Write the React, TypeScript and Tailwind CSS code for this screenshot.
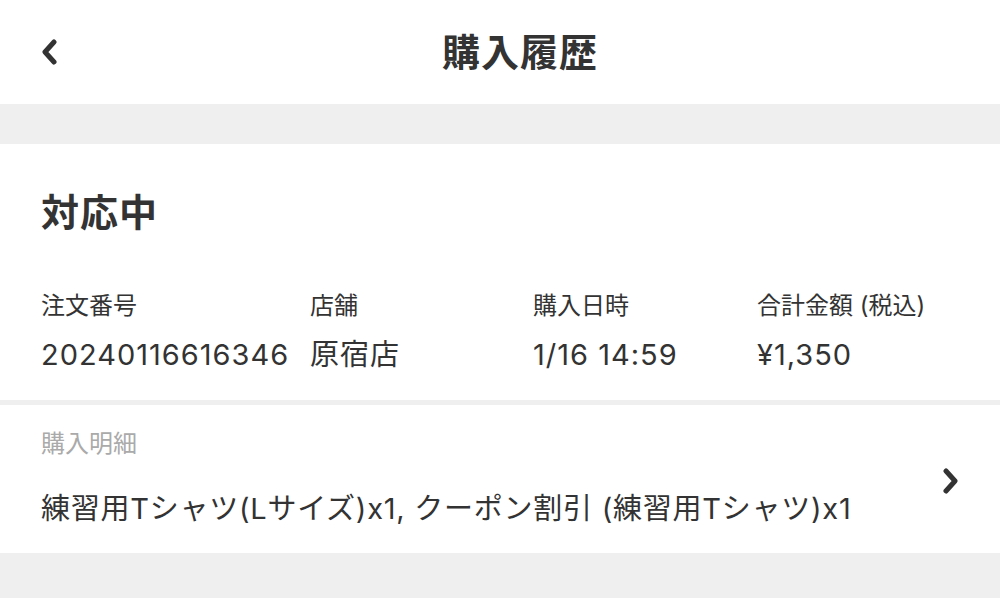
import { ReactNode } from 'react';

const font = { fontFamily: 'Inter, "Noto Sans CJK JP", "Noto Sans", sans-serif' };

const summary = [
  { label: '注文番号', value: '20240116616346' },
  { label: '店舗', value: '原宿店' },
  { label: '購入日時', value: '1/16 14:59' },
  { label: '合計金額 (税込)', value: '¥1,350' },
];

const Chevron = ({ dir }: { dir: 'left' | 'right' }) => (
  <svg width="20" height="26" viewBox="0 0 20 26" className="shrink-0">
    <polyline
      points={dir === 'left' ? '14,3 5,13 14,23' : '6,3 15,13 6,23'}
      fill="none"
      stroke="#333333"
      strokeWidth="5"
      strokeLinecap="round"
      strokeLinejoin="round"
    />
  </svg>
);

const Field = ({ label, children }: { label: string; children: ReactNode }) => (
  <div className="flex flex-col">
    <div className="text-[24px] leading-[34px] text-[#333333]">{label}</div>
    <div className="mt-[14px] text-[29px] leading-[36px] tracking-[1px] text-[#333333]">{children}</div>
  </div>
);

export default function App() {
  return (
    <div className="w-[1000px] h-[598px] bg-[#efefef] overflow-hidden" style={font}>
      {/* header */}
      <header className="h-[104px] bg-white flex items-center pl-[40px] pr-[20px]">
        <Chevron dir="left" />
        <h1 className="flex-1 text-center text-[38px] font-bold text-[#333333] tracking-[1px]">
          購入履歴
        </h1>
      </header>

      <div className="h-[40px]" />

      {/* order summary */}
      <section className="bg-white pl-[41px] pt-[40px] h-[256px]">
        <h2 className="text-[38px] leading-[56px] font-bold text-[#333333] tracking-[1px]">対応中</h2>
        <div className="mt-[49px] grid grid-cols-[269px_223px_224px_1fr]">
          {summary.map((s) => (
            <Field key={s.label} label={s.label}>
              {s.value}
            </Field>
          ))}
        </div>
      </section>

      <div className="h-[5px]" />

      {/* details */}
      <section className="bg-white h-[148px] pl-[41px] pr-[40px] flex items-center">
        <div className="flex-1 self-start pt-[23px]">
          <div className="text-[24px] leading-[32px] text-[#aaaaaa]">購入明細</div>
          <div className="mt-[31px] text-[29px] leading-[36px] tracking-[0.75px] text-[#333333]">
            練習用Tシャツ(Lサイズ)x1, クーポン割引 (練習用Tシャツ)x1
          </div>
        </div>
        <div className="mt-[4px]">
          <Chevron dir="right" />
        </div>
      </section>
    </div>
  );
}
